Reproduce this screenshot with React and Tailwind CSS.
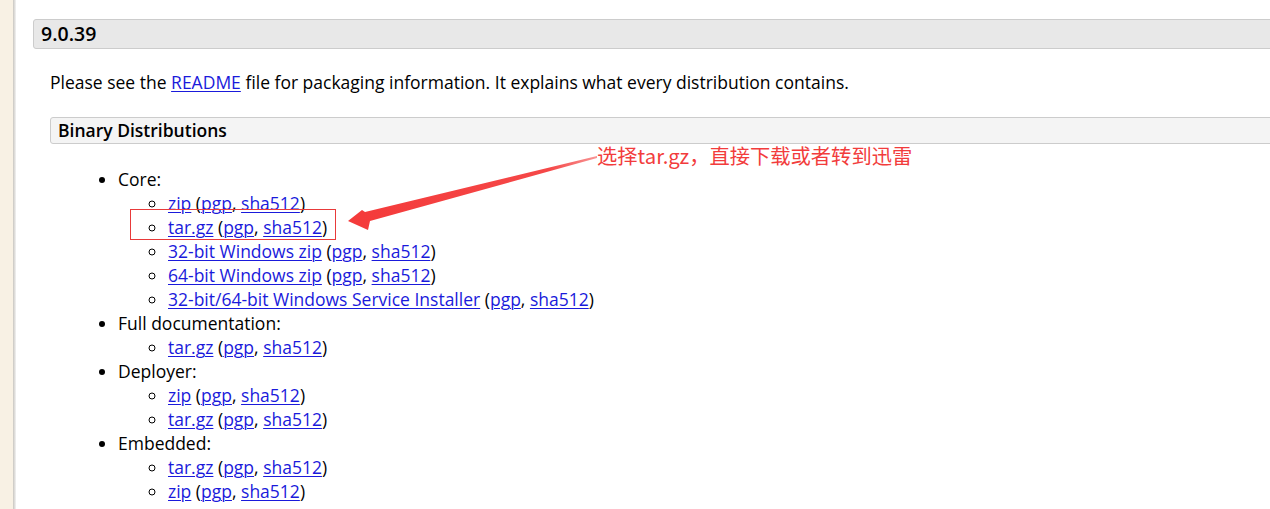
import React from "react";

const A = ({ children }) => (
  <a href="#" className="text-[#1a1adb] underline underline-offset-[2px] decoration-1">
    {children}
  </a>
);

const Sub = ({ name }) => (
  <li className="list-[circle]">
    <A>{name}</A> (<A>pgp</A>, <A>sha512</A>)
  </li>
);

export default function App() {
  return (
    <div
      className="relative flex w-[1270px] h-[509px] overflow-hidden bg-white text-black"
      style={{ fontFamily: '"Open Sans", "Noto Sans", sans-serif' }}
    >
      <div className="w-[13px] shrink-0 bg-[#f8f1e4]" />
      <div className="w-[3px] shrink-0 bg-gradient-to-r from-[#c9c6c0] to-[#f3f3f3]" />
      <div className="flex-1 min-w-0">
        <div className="ml-[17px] mt-[19px] w-[1300px] h-[30px] rounded-[3px] border border-[#cccccc] bg-[#e8e8e8] pl-[7px] text-[19.5px] font-semibold leading-[28px]">
          9.0.39
        </div>
        <p className="ml-[34px] mt-[21px] text-[17.5px] leading-[24px]">
          Please see the <A>README</A> file for packaging information. It explains what every distribution contains.
        </p>
        <div className="ml-[34px] mt-[23px] w-[1300px] h-[27px] rounded-[3px] border border-[#cccccc] bg-[#f4f4f4] pl-[7px] text-[17.5px] font-semibold leading-[25px]">
          Binary Distributions
        </div>
        <ul className="mt-[23px] pl-[102px] text-[17.5px] leading-[24px] list-disc">
          <li>
            Core:
            <ul className="pl-[50px]">
              <Sub name="zip" />
              <Sub name="tar.gz" />
              <Sub name="32-bit Windows zip" />
              <Sub name="64-bit Windows zip" />
              <Sub name="32-bit/64-bit Windows Service Installer" />
            </ul>
          </li>
          <li>
            Full documentation:
            <ul className="pl-[50px]">
              <Sub name="tar.gz" />
            </ul>
          </li>
          <li>
            Deployer:
            <ul className="pl-[50px]">
              <Sub name="zip" />
              <Sub name="tar.gz" />
            </ul>
          </li>
          <li>
            Embedded:
            <ul className="pl-[50px]">
              <Sub name="tar.gz" />
              <Sub name="zip" />
            </ul>
          </li>
        </ul>
      </div>

      <div className="absolute left-[130px] top-[209px] w-[206px] h-[31px] border border-[#e83a3a]" />
      <svg className="absolute left-0 top-0" width="1270" height="509" viewBox="0 0 1270 509">
        <defs>
          <linearGradient id="ag" x1="348" y1="0" x2="600" y2="0" gradientUnits="userSpaceOnUse">
            <stop offset="0" stopColor="#f43a3a" />
            <stop offset="0.8" stopColor="#f54848" />
            <stop offset="1" stopColor="#f89a9a" />
          </linearGradient>
        </defs>
        <polygon
          points="348,221 362,210 365,212 597,156 597,158 370,221 368,230"
          fill="url(#ag)"
        />
      </svg>
      <div
        className="absolute left-[597px] top-[141px] text-[20.3px] leading-[28px] text-[#f23c3c] whitespace-nowrap"
        style={{ fontFamily: '"Noto Sans CJK SC", "Noto Sans", sans-serif' }}
      >
        选择tar.gz，直接下载或者转到迅雷
      </div>
    </div>
  );
}
